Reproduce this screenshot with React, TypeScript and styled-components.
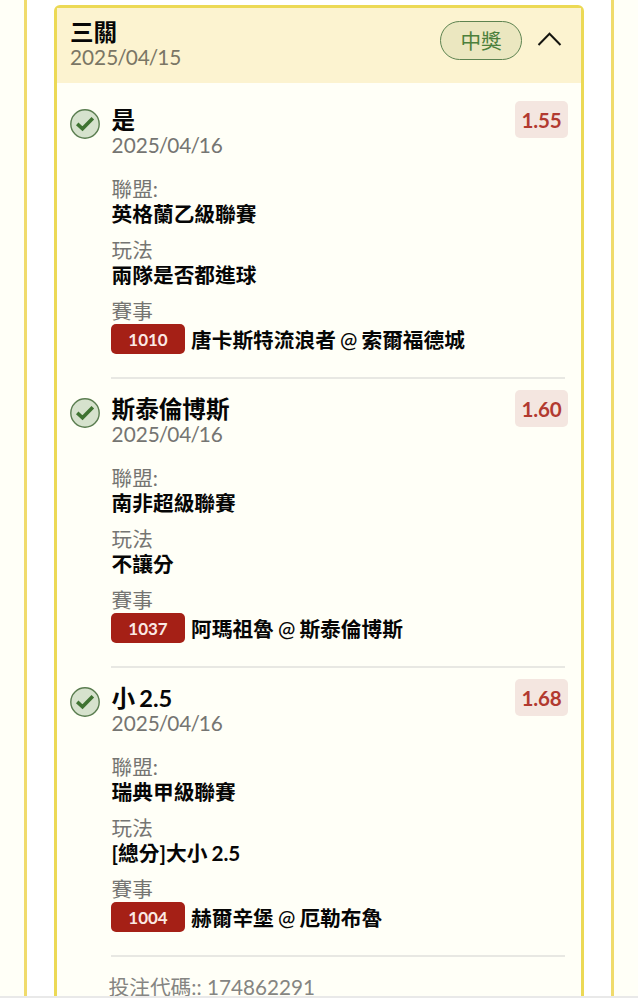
import React from "react";
import styled, { createGlobalStyle } from "styled-components";

const GlobalStyle = createGlobalStyle`
  * { box-sizing: border-box; }
  body {
    margin: 0;
    background: #ffffff;
    font-family: Lato, "Noto Sans CJK TC", sans-serif;
    color: #060606;
  }
`;

const Page = styled.div`
  width: 638px;
  height: 1000px;
  overflow: hidden;
  background: #fff;
`;

const Viewport = styled.main`
  height: 998px;
  overflow: hidden;
  padding: 0 24px;
  background: #fffff7;
  border-bottom: 2px solid #e9e9e9;
`;

const Panel = styled.section`
  height: 1100px;
  padding: 5px 27px 0;
  background: #fff;
  border: solid #f0db6c;
  border-width: 0 3px;
`;

const Card = styled.article`
  height: 1080px;
  background: #fffff7;
  border: 3px solid #ecd955;
  border-radius: 6px;
`;

const Header = styled.header`
  display: flex;
  align-items: flex-start;
  justify-content: space-between;
  height: 75px;
  padding: 11px 19px 0 13px;
  background: #fcf3d0;
`;

const Heading = styled.div`
  padding-top: 1px;
`;

const Title = styled.div`
  font-size: 23.6px;
  font-weight: 700;
  line-height: 25px;
  white-space: nowrap;
  word-spacing: -1.6px;
`;

const DateLine = styled.div<{ $tint?: string }>`
  font-size: 20.8px;
  line-height: 24px;
  color: ${(p) => p.$tint ?? "#757572"};
`;

const Slash = styled.span`
  margin: 0 -1px;
`;

const HeaderActions = styled.div`
  display: flex;
  align-items: center;
  gap: 15px;
`;

const Status = styled.span`
  display: flex;
  align-items: center;
  justify-content: center;
  width: 82px;
  height: 39px;
  margin-top: 2px;
  border: 1.5px solid #5d8350;
  border-radius: 20px;
  background: #ebe7c0;
  color: #4c803c;
  font-size: 20.6px;
  line-height: 24px;
`;

const Leg = styled.section`
  display: flex;
  height: 289px;
  padding: 18px 13px 0 12.5px;
`;

const Legs = styled.div`
  padding-top: 6px;
`;

const CheckIcon = styled.svg`
  flex: none;
  width: 30px;
  height: 30px;
  margin: 1.5px 11.5px 0 0;
`;

const LegBody = styled.div`
  flex: 1;
  height: 272px;
  margin-right: 3px;
  border-bottom: 2px solid #e8e8e3;
`;

const LegTop = styled.div`
  display: flex;
  justify-content: space-between;
  height: 70px;
  margin-right: -3px;
  padding-left: 0.6px;
`;

const Odds = styled.span`
  width: 53px;
  height: 37px;
  margin-top: -6px;
  border-radius: 5px;
  background: #f4e6e0;
  color: #b23a30;
  font-size: 20.6px;
  font-weight: 700;
  letter-spacing: -0.2px;
  line-height: 38px;
  text-align: center;
`;

const Field = styled.div`
  height: 61px;
  padding-left: 0.6px;
`;

const Label = styled.div`
  font-size: 20.6px;
  line-height: 24px;
  color: #757572;
`;

const MatchLabel = styled(Label)`
  padding-left: 0.6px;
`;

const Value = styled.div`
  font-size: 20.7px;
  font-weight: 700;
  line-height: 26px;
  white-space: nowrap;
  word-spacing: -0.9px;
`;

const Match = styled.div`
  display: flex;
  align-items: center;
  gap: 6px;
  height: 30px;
  margin-top: 1px;
`;

const MatchName = styled(Value)`
  padding-top: 1px;
`;

const MatchCode = styled.span`
  width: 74px;
  height: 30px;
  border-radius: 5px;
  background: #a52016;
  color: #fbe9e4;
  font-size: 17px;
  font-weight: 700;
  line-height: 31px;
  text-align: center;
`;

const At = styled.span`
  font-weight: 500;
`;

const BetCode = styled.footer`
  padding: 19px 0 0 51.5px;
  font-size: 20.7px;
  line-height: 24px;
  color: #858582;
`;

interface LegData {
  pick: string;
  odds: string;
  league: string;
  play: string;
  code: string;
  away: string;
  home: string;
}

const legs: LegData[] = [
  { pick: "是", odds: "1.55", league: "英格蘭乙級聯賽", play: "兩隊是否都進球", code: "1010", away: "唐卡斯特流浪者", home: "索爾福德城" },
  { pick: "斯泰倫博斯", odds: "1.60", league: "南非超級聯賽", play: "不讓分", code: "1037", away: "阿瑪祖魯", home: "斯泰倫博斯" },
  { pick: "小 2.5", odds: "1.68", league: "瑞典甲級聯賽", play: "[總分]大小 2.5", code: "1004", away: "赫爾辛堡", home: "厄勒布魯" },
];

const WonIcon = () => (
  <CheckIcon viewBox="0 0 30 30">
    <circle cx="15" cy="15" r="14.2" fill="#d6e2cd" stroke="#5a7d50" strokeWidth="1.4" />
    <path d="M7.2 14.9 L12.5 19.8 L22.8 9.2" fill="none" stroke="#3f7332" strokeWidth="3.6" />
  </CheckIcon>
);

const DateText = ({ value, tint }: { value: string; tint?: string }) => {
  const [year, month, day] = value.split("/");
  return (
    <DateLine $tint={tint}>
      {year}
      <Slash>/</Slash>
      {month}
      <Slash>/</Slash>
      {day}
    </DateLine>
  );
};

const LegRow = ({ leg }: { leg: LegData }) => (
  <Leg>
    <WonIcon />
    <LegBody>
      <LegTop>
        <Heading>
          <Title>{leg.pick}</Title>
          <DateText value="2025/04/16" />
        </Heading>
        <Odds>{leg.odds}</Odds>
      </LegTop>
      <Field>
        <Label>聯盟:</Label>
        <Value>{leg.league}</Value>
      </Field>
      <Field>
        <Label>玩法</Label>
        <Value>{leg.play}</Value>
      </Field>
      <MatchLabel>賽事</MatchLabel>
      <Match>
        <MatchCode>{leg.code}</MatchCode>
        <MatchName>
          {leg.away} <At>@</At> {leg.home}
        </MatchName>
      </Match>
    </LegBody>
  </Leg>
);

export default function App() {
  return (
    <Page>
      <GlobalStyle />
      <Viewport>
        <Panel>
          <Card>
            <Header>
              <Heading>
                <Title>三關</Title>
                <DateText value="2025/04/15" tint="#7a7665" />
              </Heading>
              <HeaderActions>
                <Status>中獎</Status>
                <svg width="25" height="16" viewBox="0 0 25 16" fill="none" stroke="#151510" strokeWidth="2">
                  <path d="M1.5 13 L12.5 1.8 L23.5 13" />
                </svg>
              </HeaderActions>
            </Header>
            <Legs>
              {legs.map((leg) => (
                <LegRow key={leg.code} leg={leg} />
              ))}
            </Legs>
            <BetCode>投注代碼:: 174862291</BetCode>
          </Card>
        </Panel>
      </Viewport>
    </Page>
  );
}
